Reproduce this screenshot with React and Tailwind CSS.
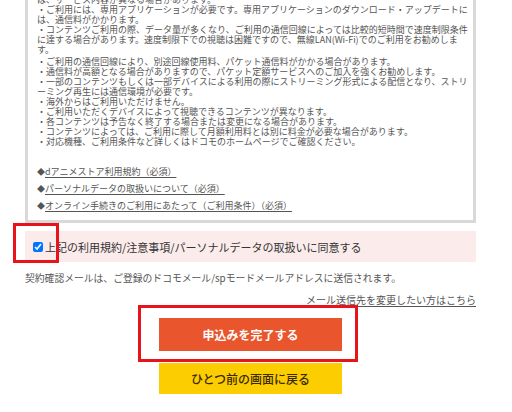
import React from "react";

const lines = [
  "は、サービス内容が異なる場合があります。",
  "・ご利用には、専用アプリケーションが必要です。専用アプリケーションのダウンロード・アップデートに",
  "は、通信料がかかります。",
  "・コンテンツご利用の際、データ量が多くなり、ご利用の通信回線によっては比較的短時間で速度制限条件",
  "に達する場合があります。速度制限下での視聴は困難ですので、無線LAN(Wi-Fi)でのご利用をお勧めしま",
  "す。",
  "・ご利用の通信回線により、別途回線使用料、パケット通信料がかかる場合があります。",
  "・通信料が高額となる場合がありますので、パケット定額サービスへのご加入を強くお勧めします。",
  "・一部のコンテンツもしくは一部デバイスによる利用の際にストリーミング形式による配信となり、ストリ",
  "ーミング再生には通信環境が必要です。",
  "・海外からはご利用いただけません。",
  "・ご利用いただくデバイスによって視聴できるコンテンツが異なります。",
  "・各コンテンツは予告なく終了する場合または変更になる場合があります。",
  "・コンテンツによっては、ご利用に際して月額利用料とは別に料金が必要な場合があります。",
  "・対応機種、ご利用条件など詳しくはドコモのホームページでご確認ください。",
];

const links = [
  "dアニメストア利用規約（必須）",
  "パーソナルデータの取扱いについて（必須）",
  "オンライン手続きのご利用にあたって（ご利用条件）（必須）",
];

export default function App() {
  return (
    <div
      className="w-[512px] h-[412px] overflow-hidden bg-white"
      style={{ fontFamily: '"Noto Sans CJK JP", "Noto Sans", sans-serif' }}
    >
      <div className="ml-[25px] w-[451px]">
        {/* scroll box */}
        <div className="-mt-[5px] border-[3px] border-t-0 border-[#d9d9d9] pl-[9px] pb-[6px]">
          <div className="text-[9px] leading-[10px] text-[#555]">
            {lines.map((l, i) => (
              <div
                key={i}
                className={"whitespace-nowrap " + (i === 6 ? "mt-[2px]" : "")}
              >
                {l}
              </div>
            ))}
          </div>
          <div className="mt-[16px] text-[9px] text-[#555]">
            {links.map((l, i) => (
              <div key={i} className="h-[17px] leading-[17px] whitespace-nowrap">
                <span className="text-[8px]">◆</span>
                <span className="underline underline-offset-2">{l}</span>
              </div>
            ))}
          </div>
        </div>

        {/* agree */}
        <div className="relative mt-[8px]">
          <div className="h-[31px] bg-[#fcebeb] flex items-center pl-[8px]">
            <input
              type="checkbox"
              defaultChecked
              className="w-[10px] h-[10px] m-0 accent-[#0075ff]"
            />
            <span className="ml-[2px] text-[11px] leading-[14px] text-[#333]">
              上記の利用規約/注意事項/パーソナルデータの取扱いに同意する
            </span>
          </div>
          <div className="absolute left-[-12px] top-[-8px] w-[46px] h-[40px] border-[3px] border-[#e8141c]" />
        </div>

        <div className="mt-[9px] text-[9.8px] leading-[14px] text-[#555] whitespace-nowrap">
          契約確認メールは、ご登録のドコモメール/spモードメールアドレスに送信されます。
        </div>

        <div className="mt-[8px] flex justify-end">
          <span className="text-[10px] leading-[13px] text-[#555] underline underline-offset-2 whitespace-nowrap">
            メール送信先を変更したい方はこちら
          </span>
        </div>

        <div className="flex flex-col items-center">
          <div className="relative mt-[12px]">
            <div className="w-[183px] h-[33px] bg-[#e9552c] flex items-center justify-center text-white font-bold text-[12px]">
              申込みを完了する
            </div>
            <div className="absolute left-[-21px] top-[-13px] w-[220px] h-[57px] border-[3px] border-[#e8141c]" />
          </div>
          <div className="mt-[12px] w-[183px] h-[31px] bg-[#fccd00] flex items-center justify-center text-[#3a2a00] font-medium text-[12px]">
            ひとつ前の画面に戻る
          </div>
        </div>
      </div>
    </div>
  );
}
